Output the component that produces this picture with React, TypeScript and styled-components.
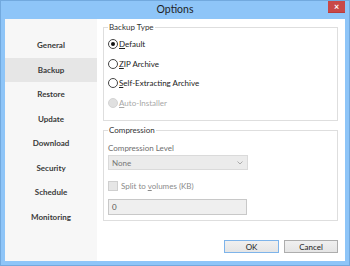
import React from 'react';
import styled, { createGlobalStyle } from 'styled-components';

const Global = createGlobalStyle`
  html, body { margin: 0; padding: 0; }
  body {
    font-family: Lato, "Open Sans", sans-serif;
    background: #8ec5f8;
  }
`;

const Window = styled.div`
  width: 350px;
  height: 266px;
  box-sizing: border-box;
  border: 1px solid #72a9de;
  background: #8ec5f8;
  display: flex;
  flex-direction: column;
  padding: 0 4px 4px 4px;
`;

const TitleBar = styled.div`
  height: 18px;
  display: grid;
  grid-template-columns: 1fr auto 1fr;
  align-items: start;
`;

const Title = styled.div`
  grid-column: 2;
  font-size: 10.5px;
  line-height: 17px;
  color: #1f1f1f;
`;

const CloseButton = styled.span`
  grid-column: 3;
  justify-self: end;
  display: block;
  width: 17px;
  height: 12px;
  box-sizing: border-box;
  border-bottom: 1px solid #b83c3c;
  background: #c84848;
  color: #ffffff;
  font-size: 9px;
  font-weight: bold;
  line-height: 11px;
  text-align: center;
`;

const Client = styled.div`
  flex: 1;
  display: flex;
  background: #fff;
`;

const Sidebar = styled.div`
  width: 92px;
  background: #f7f7f7;
  padding-top: 14px;
  display: flex;
  flex-direction: column;
`;

const NavItem = styled.div<{ $active?: boolean }>`
  height: 24.5px;
  display: flex;
  align-items: center;
  justify-content: center;
  font-size: 8px;
  font-weight: bold;
  color: #3a3a3a;
  background: ${p => (p.$active ? '#e6e6e6' : 'transparent')};
`;

const Main = styled.div`
  flex: 1;
  display: flex;
  flex-direction: column;
  padding: 3px 7px 8px 6px;
`;

const Group = styled.fieldset<{ $height: number }>`
  margin: 0;
  padding: 0 4px 0 4px;
  border: 1px solid #dedede;
  height: ${p => p.$height}px;
  box-sizing: border-box;
  display: flex;
  flex-direction: column;
  & + & {
    margin-top: 4px;
  }
`;

const Legend = styled.legend`
  font-size: 8px;
  color: #333;
  padding: 0 1px;
  margin-left: 0;
`;

const RadioList = styled.div`
  display: flex;
  flex-direction: column;
  padding-top: 2px;
`;

const RadioRow = styled.div<{ $disabled?: boolean }>`
  height: 19.7px;
  display: flex;
  align-items: center;
  font-size: 8px;
  color: ${p => (p.$disabled ? '#a8a8a8' : '#222')};
`;

const RadioCircle = styled.span<{ $checked?: boolean; $disabled?: boolean }>`
  width: 8px;
  height: 8px;
  border-radius: 50%;
  border: 1px solid ${p => (p.$disabled ? '#d4d4d4' : '#444')};
  background: ${p => (p.$disabled ? '#e0e0e0' : '#fff')};
  margin-right: 1px;
  display: flex;
  align-items: center;
  justify-content: center;
  &::after {
    content: '';
    width: 4px;
    height: 4px;
    border-radius: 50%;
    background: ${p => (p.$checked ? '#111' : 'transparent')};
  }
`;

const FieldLabel = styled.div`
  font-size: 8px;
  color: #6e6e6e;
  margin-top: 5px;
  height: 15px;
  display: flex;
  align-items: center;
`;

const SelectBox = styled.div`
  height: 15px;
  width: 140px;
  box-sizing: border-box;
  border: 1px solid #dadada;
  background: #ebebeb;
  display: flex;
  align-items: center;
  justify-content: space-between;
  padding: 0 4px 0 3px;
  font-size: 8px;
  color: #777;
`;

const CheckRow = styled.div`
  margin-top: 9px;
  height: 14px;
  display: flex;
  align-items: center;
  font-size: 8px;
  color: #8a8a8a;
`;

const CheckBox = styled.span`
  width: 8px;
  height: 8px;
  border: 1px solid #cfcfcf;
  background: #e6e6e6;
  margin-right: 3px;
`;

const TextInput = styled.div`
  margin-top: 6px;
  height: 16px;
  width: 139px;
  box-sizing: border-box;
  border: 1px solid #c8c8c8;
  background: #efefef;
  display: flex;
  align-items: center;
  padding-left: 3px;
  font-size: 8px;
  color: #555;
`;

const ButtonRow = styled.div`
  margin-top: auto;
  display: flex;
  justify-content: flex-end;
  gap: 5px;
`;

const Button = styled.div<{ $default?: boolean }>`
  width: ${p => (p.$default ? 55 : 54)}px;
  height: 13px;
  box-sizing: border-box;
  border: 1px solid ${p => (p.$default ? '#7eb4ea' : '#adadad')};
  background: linear-gradient(#f0f0f0, #e5e5e5);
  display: flex;
  align-items: center;
  justify-content: center;
  font-size: 8px;
  color: #222;
`;

const Chevron = () => (
  <svg width="6" height="4" viewBox="0 0 6 4">
    <path d="M0.5 0.5 L3 3 L5.5 0.5" fill="none" stroke="#9a9a9a" strokeWidth="0.8" />
  </svg>
);

const navItems = ['General', 'Backup', 'Restore', 'Update', 'Download', 'Security', 'Schedule', 'Monitoring'];

export default function App() {
  return (
    <>
      <Global />
      <Window>
        <TitleBar>
          <Title>Options</Title>
          <CloseButton>×</CloseButton>
        </TitleBar>
        <Client>
          <Sidebar>
            {navItems.map(n => (
              <NavItem key={n} $active={n === 'Backup'}>{n}</NavItem>
            ))}
          </Sidebar>
          <Main>
            <Group $height={99}>
              <Legend>Backup Type</Legend>
              <RadioList>
                <RadioRow>
                  <RadioCircle $checked />
                  <span><u>D</u>efault</span>
                </RadioRow>
                <RadioRow>
                  <RadioCircle />
                  <span><u>Z</u>IP Archive</span>
                </RadioRow>
                <RadioRow>
                  <RadioCircle />
                  <span><u>S</u>elf-Extracting Archive</span>
                </RadioRow>
                <RadioRow $disabled>
                  <RadioCircle $disabled />
                  <span><u>A</u>uto-Installer</span>
                </RadioRow>
              </RadioList>
            </Group>
            <Group $height={96}>
              <Legend>Compression</Legend>
              <FieldLabel>Compression Level</FieldLabel>
              <SelectBox>
                <span>None</span>
                <Chevron />
              </SelectBox>
              <CheckRow>
                <CheckBox />
                <span>Split to <u>v</u>olumes (KB)</span>
              </CheckRow>
              <TextInput>0</TextInput>
            </Group>
            <ButtonRow>
              <Button $default>OK</Button>
              <Button>Cancel</Button>
            </ButtonRow>
          </Main>
        </Client>
      </Window>
    </>
  );
}
